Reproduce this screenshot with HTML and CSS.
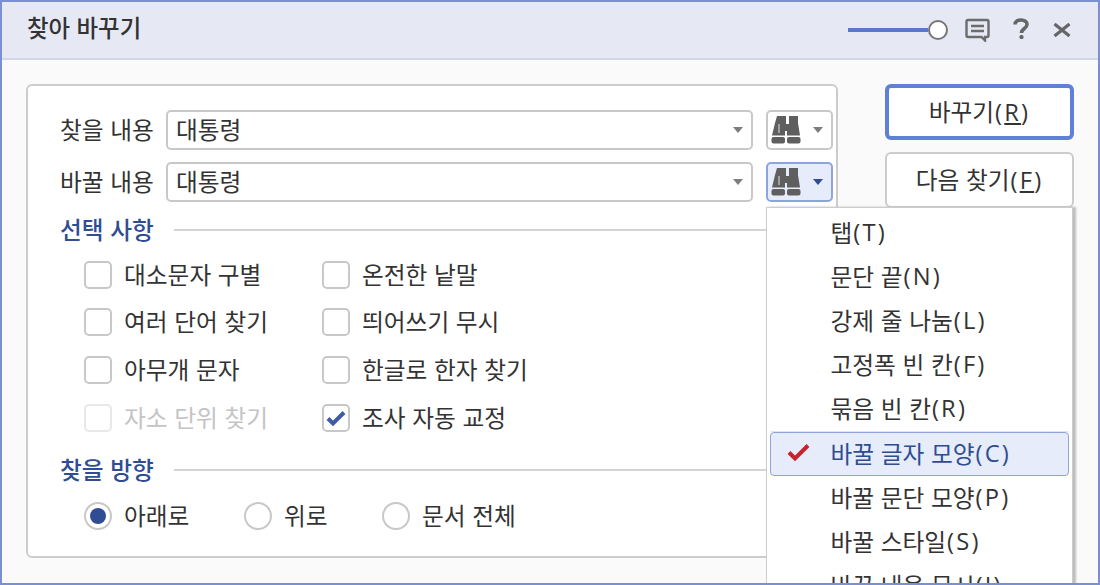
FILE: index.html
```html
<!DOCTYPE html>
<html lang="ko">
<head>
<meta charset="utf-8">
<title>찾아 바꾸기</title>
<link rel="stylesheet" href="styles.css">
</head>
<body>
<div class="window">
  <header class="titlebar">
    <div class="title">찾아 바꾸기</div>
    <div class="tools">
      <div class="slider"><span class="track"></span><span class="knob"></span></div>
      <svg class="tool-comment" width="26" height="24" viewBox="0 0 26 24"><path d="M3 2h19a1.500 1.500 0 0 1 1.500 1.500v14a1.500 1.500 0 0 1-1.500 1.500h-2v3.500L16.500 19H3a1.500 1.500 0 0 1-1.500-1.500v-14A1.500 1.500 0 0 1 3 2z" fill="none" stroke="#6c6c6c" stroke-width="2.400"/><path d="M6 8h13M6 13h13" stroke="#6c6c6c" stroke-width="2.400"/></svg>
      <svg class="tool-help" width="16" height="22" viewBox="0 0 16 22"><path d="M2 6.500C2 3.500 4.500 2 8 2s6 1.800 6 4.500c0 4-5.500 4-5.500 8.500" fill="none" stroke="#666" stroke-width="3.600"/><rect x="6.500" y="17" width="4" height="4" rx="1.500" fill="#666"/></svg>
      <svg class="tool-close" width="18" height="14" viewBox="0 0 18 14"><path d="M1.500 1l15 12M16.500 1l-15 12" stroke="#666" stroke-width="3.200"/></svg>
    </div>
  </header>
  <main class="content">
    <section class="panel">
      <div class="field">
        <label class="field-label">찾을 내용</label>
        <div class="combo"><span class="combo-text">대통령</span><span class="arrow"></span></div>
        <div class="icon-btn">
          <svg width="30" height="28" viewBox="0 0 30 28"><use href="#bino"/></svg>
          <span class="arrow"></span>
        </div>
      </div>
      <div class="field">
        <label class="field-label">바꿀 내용</label>
        <div class="combo"><span class="combo-text">대통령</span><span class="arrow"></span></div>
        <div class="icon-btn active">
          <svg width="30" height="28" viewBox="0 0 30 28"><use href="#bino"/></svg>
          <span class="arrow"></span>
        </div>
      </div>
      <div class="group-head"><span>선택 사항</span><i></i></div>
      <div class="options">
        <div class="opt"><span class="check"></span><span class="opt-text">대소문자 구별</span></div>
        <div class="opt"><span class="check"></span><span class="opt-text">온전한 낱말</span></div>
        <div class="opt"><span class="check"></span><span class="opt-text">여러 단어 찾기</span></div>
        <div class="opt"><span class="check"></span><span class="opt-text">띄어쓰기 무시</span></div>
        <div class="opt"><span class="check"></span><span class="opt-text">아무개 문자</span></div>
        <div class="opt"><span class="check"></span><span class="opt-text">한글로 한자 찾기</span></div>
        <div class="opt disabled"><span class="check"></span><span class="opt-text">자소 단위 찾기</span></div>
        <div class="opt"><span class="check on"><svg width="22" height="22" viewBox="0 0 22 22"><path d="M3 11.500l5 5L19 5.500" fill="none" stroke="#3f5aa8" stroke-width="4"/></svg></span><span class="opt-text">조사 자동 교정</span></div>
      </div>
      <div class="group-head"><span>찾을 방향</span><i></i></div>
      <div class="radios">
        <div class="rad r1"><span class="radio on"></span><span class="opt-text">아래로</span></div>
        <div class="rad r2"><span class="radio"></span><span class="opt-text">위로</span></div>
        <div class="rad"><span class="radio"></span><span class="opt-text">문서 전체</span></div>
      </div>
    </section>
    <aside class="side">
      <button class="btn primary"><span class="btn-text">바꾸기<span class="key">(<u>R</u>)</span></span></button>
      <button class="btn"><span class="btn-text">다음 찾기<span class="key">(<u>F</u>)</span></span></button>
    </aside>
  </main>
  <ul class="menu">
    <li>탭<span class="key">(T)</span></li>
    <li>문단 끝<span class="key">(N)</span></li>
    <li>강제 줄 나눔<span class="key">(L)</span></li>
    <li>고정폭 빈 칸<span class="key">(F)</span></li>
    <li class="last-plain">묶음 빈 칸<span class="key">(R)</span></li>
    <li class="sel"><svg class="tick" width="24" height="20" viewBox="0 0 24 20"><path d="M2 10.500l6 6L21 3.500" fill="none" stroke="#c8232c" stroke-width="4"/></svg>바꿀 글자 모양<span class="key">(C)</span></li>
    <li>바꿀 문단 모양<span class="key">(P)</span></li>
    <li>바꿀 스타일<span class="key">(S)</span></li>
    <li>바꿀 내용 무시<span class="key">(I)</span></li>
  </ul>
</div>
<svg class="defs" width="0" height="0">
  <symbol id="bino" viewBox="0 0 30 28">
    <path d="M6 0h9v8h3V0h9v7l2 12.500H16V15h-2v4.500H1L4 7z" fill="#5f5f5f"/>
    <rect x="0.500" y="21" width="13.500" height="6.500" rx="2" fill="#5f5f5f"/>
    <rect x="16" y="21" width="13.500" height="6.500" rx="2" fill="#5f5f5f"/>
    <path d="M8 8v9" stroke="#a0a0a0" stroke-width="2"/>
  </symbol>
</svg>
</body>
</html>
```
FILE: styles.css
```css
* { box-sizing: border-box; }
html, body { margin: 0; padding: 0; height: 100%; overflow: hidden; }
body { font-family: "Noto Sans CJK KR", "Noto Sans", sans-serif; font-size: 23.700px; color: #333; }
.defs { position: absolute; }
.window { position: relative; width: 1100px; height: 585px; border: 2px solid #7b90d2; background: #fafafa; overflow: hidden; display: flex; flex-direction: column; }
.titlebar { height: 58px; flex: none; background: #e6e8f4; border-bottom: 2px solid #d2d6ea; display: flex; align-items: center; justify-content: space-between; padding: 0 27px 0 25px; }
.title { font-size: 23.400px; font-weight: 500; color: #333; line-height: 1; margin-top: -5px; }
.tools { display: flex; align-items: center; margin-top: -1px; }
.slider { width: 100px; height: 20px; display: flex; align-items: center; margin-right: 17px; }
.track { width: 81px; height: 4px; background: #5b78c8; }
.knob { width: 20px; height: 20px; border-radius: 50%; border: 2px solid #777; background: #fff; flex: none; }
.tool-comment { margin-right: 22px; margin-top: 1px; }
.tool-help { margin-right: 24px; margin-top: -2px; }
.content { flex: 1; display: flex; align-items: flex-start; padding: 24px 24px 0; gap: 47px; min-height: 0; }
.panel { width: 812px; height: 474px; background: #fff; border: 2px solid #ccc; border-radius: 6px; padding: 24px 32px 0; flex: none; }
.field { display: flex; align-items: center; height: 40px; margin-bottom: 12px; }
.field-label { width: 106px; flex: none; white-space: nowrap; padding-bottom: 3px; }
.combo { width: 587px; height: 40px; flex: none; background: #fff; border: 2px solid #c8c8c8; border-radius: 5px; display: flex; align-items: center; justify-content: space-between; padding: 0 8px 0 8px; }
.combo-text { margin-bottom: 3px; }
.arrow { width: 0; height: 0; border-left: 5.500px solid transparent; border-right: 5.500px solid transparent; border-top: 6px solid #7d7d7d; }
.icon-btn { width: 67px; height: 40px; flex: none; margin-left: 13px; background: #fff; border: 2px solid #c8c8c8; border-radius: 5px; display: flex; align-items: center; padding: 0 8px 0 3px; justify-content: space-between; }
.icon-btn.active { background: #e6ecf9; border-color: #8ea4dc; }
.icon-btn.active .arrow { border-top-color: #2f4d93; }
.group-head { display: flex; align-items: center; color: #2f4d93; font-weight: 500; gap: 20px; height: 32px; }
.group-head span { margin-bottom: 3px; }
.group-head i { flex: 1; height: 2px; background: #d4d4d4; }
.options { display: grid; grid-template-columns: 238px 1fr; grid-auto-rows: 47.600px; padding: 5px 0 0 24px; height: 208px; }
.opt { display: flex; align-items: center; gap: 12px; white-space: nowrap; }
.opt-text { margin-bottom: 2px; }
.check { width: 28px; height: 28px; flex: none; border: 2px solid #c8c8c8; border-radius: 5px; background: #fff; display: flex; align-items: center; justify-content: center; }
.disabled { color: #c4c4c4; }
.disabled .check { border-color: #e8e8e8; }
.radios { display: flex; padding: 12px 0 0 24px; }
.rad { display: flex; align-items: center; gap: 12px; white-space: nowrap; }
.r1 { width: 160px; }
.r2 { width: 138px; }
.radio { width: 28px; height: 28px; flex: none; border: 2px solid #c8c8c8; border-radius: 50%; background: #fff; display: flex; align-items: center; justify-content: center; }
.radio.on::after { content: ""; width: 16px; height: 16px; border-radius: 50%; background: #2f4d93; }
.side { width: 189px; flex: none; display: flex; flex-direction: column; gap: 12px; }
.btn { height: 56px; font: inherit; color: #333; background: #fff; border: 2px solid #ccc; border-radius: 6px; padding: 0; }
.btn-text { display: block; margin-bottom: 3px; }
.btn.primary { border: 4px solid #5e80d6; }
.key { font-family: "Open Sans", "Noto Sans", sans-serif; letter-spacing: 2.200px; margin-left: 1px; }
.menu { position: absolute; left: 764px; top: 205px; width: 307px; height: 400px; margin: 0; padding: 3px 3px 0; list-style: none; background: #fff; border: 1px solid #ccc; box-shadow: 3px 0 2px #bdbdbd; }
.menu li { height: 44.200px; padding: 0 0 3px 59.500px; display: flex; align-items: center; position: relative; white-space: nowrap; border: 1.500px solid transparent; }
.menu li.last-plain { border-bottom-color: #e4e4e4; }
.menu li.sel { background: #e6ecf9; border-color: #8ea4dc; border-radius: 4px; color: #2f4d93; }
.tick { position: absolute; left: 16px; top: 9px; }
```
